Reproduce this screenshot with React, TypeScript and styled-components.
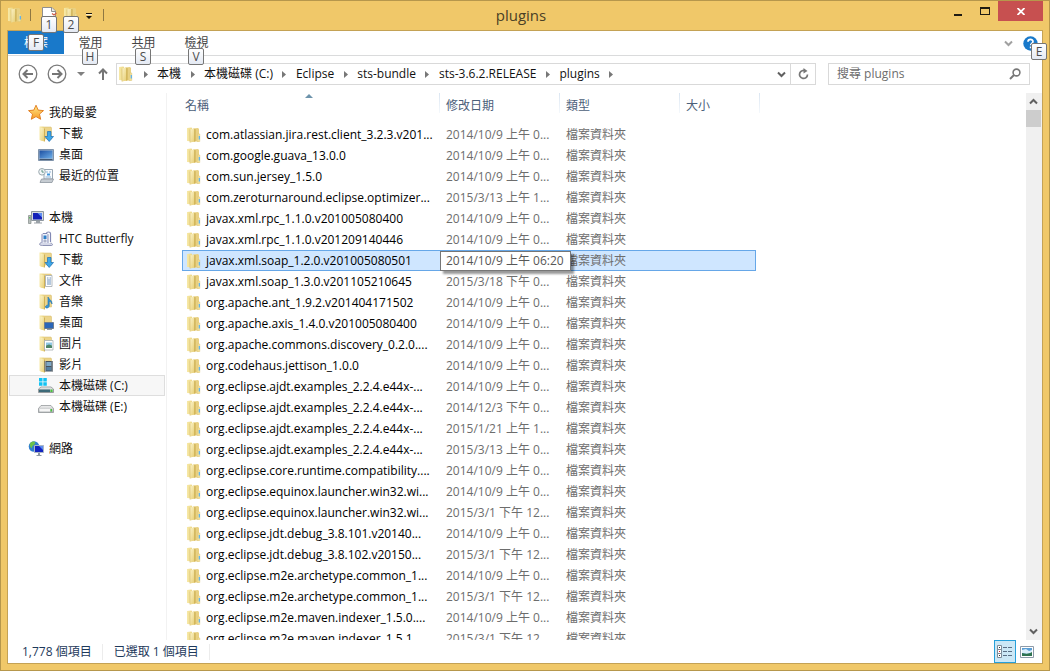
import React from "react";
import styled, { createGlobalStyle, css } from "styled-components";

const GlobalStyle = createGlobalStyle`
  *, *::before, *::after { box-sizing: border-box; }
  body {
    margin: 0;
    font-family: "Open Sans", "Noto Sans CJK TC", sans-serif;
    font-size: 12px;
    line-height: 16px;
    color: #000;
  }
  button, input { font: inherit; color: inherit; }
  ul, ol { list-style: none; margin: 0; padding: 0; }
`;

/* ---------- Window frame ---------- */

const Frame = styled.div`
  display: flex;
  flex-direction: column;
  height: 100vh;
  padding: 0 6px 6px;
  background: #f0c869;
  border: 1px solid #b6974c;
`;

const TitleBar = styled.header`
  display: grid;
  grid-template-columns: 1fr auto 1fr;
  flex: none;
  height: 29px;
`;

const QuickAccess = styled.div`
  display: flex;
  align-items: center;
  height: 28px;
`;

const PlainButton = styled.button`
  position: relative;
  display: flex;
  align-items: center;
  justify-content: center;
  flex: none;
  padding: 0;
  border: 0;
  background: none;
`;

const QuickButton = styled(PlainButton)<{ $narrow?: boolean }>`
  width: ${(p) => (p.$narrow ? 14 : 22)}px;
  height: 22px;
`;

const Divider = styled.span`
  width: 1px;
  height: 12px;
  margin: 0 7px;
  background: #8e7742;
`;

const Title = styled.h1`
  margin: 0;
  padding-right: 8px;
  font-size: 15px;
  font-weight: 400;
  line-height: 28px;
  color: #4a3f26;
`;

const WindowButtons = styled.div`
  display: flex;
  justify-content: flex-end;
`;

const WindowButton = styled(PlainButton)<{ $close?: boolean }>`
  width: ${(p) => (p.$close ? 45 : 27)}px;
  height: 20px;
  background: ${(p) => (p.$close ? "#c75050" : "transparent")};
`;

const Content = styled.div`
  display: flex;
  flex-direction: column;
  flex: 1;
  min-height: 0;
  background: #fff;
  border: 1px solid #c4a255;
`;

const KeyTip = styled.kbd<{ $x: number; $y: number }>`
  position: absolute;
  z-index: 2;
  left: ${(p) => p.$x}px;
  top: ${(p) => p.$y}px;
  width: 16px;
  height: 17px;
  border: 1px solid #767676;
  border-radius: 2px;
  background: linear-gradient(#fff, #e4e9f3);
  color: #4c4c4c;
  font: 12px/15px "Open Sans", sans-serif;
  text-align: center;
`;

/* ---------- Ribbon tabs ---------- */

const Tabs = styled.nav`
  display: flex;
  flex: none;
  height: 25px;
  border-bottom: 1px solid #dadbdc;
`;

const Tab = styled(PlainButton)<{ $file?: boolean }>`
  width: ${(p) => (p.$file ? 56 : 53)}px;
  height: ${(p) => (p.$file ? 23 : 24)}px;
  background: ${(p) => (p.$file ? "#1979ca" : "transparent")};
  color: ${(p) => (p.$file ? "#fff" : "#444")};
`;

const TabTools = styled.div`
  display: flex;
  align-items: center;
  gap: 10px;
  margin-left: auto;
  padding-right: 4px;
`;

/* ---------- Address row ---------- */

const AddressRow = styled.div`
  display: flex;
  align-items: center;
  flex: none;
  height: 36px;
  padding-right: 12px;
  padding-left: 10px;
`;

const NavButton = styled(PlainButton)<{ $w: number; $gap?: number }>`
  width: ${(p) => p.$w}px;
  height: 20px;
  margin-right: ${(p) => p.$gap ?? 0}px;
`;

const AddressBox = styled.div`
  display: flex;
  align-items: stretch;
  flex: 1;
  min-width: 0;
  height: 22px;
  border: 1px solid #d9d9d9;
`;

const Crumbs = styled.ol`
  display: flex;
  align-items: center;
  flex: 1;
  padding-left: 1px;
`;

const Crumb = styled.li`
  display: flex;
  align-items: center;
  white-space: nowrap;
`;

const CrumbLink = styled.a`
  color: #111;
  text-decoration: none;
`;

const CrumbArrow = styled(PlainButton)`
  width: 23px;
  height: 20px;
`;

const Refresh = styled(PlainButton)`
  width: 25px;
  border-left: 1px solid #d9d9d9;
`;

const SearchBox = styled.label`
  display: flex;
  align-items: center;
  flex: none;
  width: 202px;
  height: 22px;
  margin-left: 12px;
  padding: 0 8px;
  border: 1px solid #d9d9d9;
`;

const SearchInput = styled.input`
  flex: 1;
  min-width: 0;
  padding: 0;
  border: 0;
  outline: 0;
  background: none;
  &::placeholder { color: #6d6d6d; opacity: 1; }
`;

/* ---------- Body ---------- */

const Body = styled.div`
  display: flex;
  flex: 1;
  min-height: 0;
  padding-top: 1px;
`;

const Sidebar = styled.aside`
  flex: none;
  width: 159px;
  padding: 9px 1px 0;
  border-right: 1px solid #f2f2f2;
`;

const Group = styled.ul`
  margin-bottom: 21px;
`;

const SideItem = styled.li<{ $root?: boolean; $selected?: boolean }>`
  border: 1px solid ${(p) => (p.$selected ? "#dedede" : "transparent")};
  background: ${(p) => (p.$selected ? "#f7f7f7" : "transparent")};
  padding-left: ${(p) => (p.$root ? 18 : 28)}px;
`;

const SideLink = styled.a`
  display: flex;
  align-items: center;
  gap: 5px;
  height: 19px;
  color: #111;
  text-decoration: none;
  white-space: nowrap;
`;

const Main = styled.main`
  flex: 1;
  min-width: 0;
  overflow: hidden;
  padding-left: 15px;
`;

const FileTable = styled.table`
  width: 578px;
  table-layout: fixed;
  border-collapse: separate;
  border-spacing: 0;
`;

const HeadCell = styled.th`
  position: relative;
  height: 31px;
  padding: 0 0 6px 6px;
  font-weight: 400;
  text-align: left;
  color: #4c607a;
  background: linear-gradient(#dbe6f2, #f4f8fc) right top / 1px 20px no-repeat;
  &:first-child { padding-left: 3px; }
`;

const SortMark = styled.svg`
  position: absolute;
  left: 123px;
  top: 0;
`;

const selectedCell = css`
  background: #cfe6ff;
  border-color: #66a7e8;
`;

const Cell = styled.td`
  position: relative;
  height: 21px;
  padding: 0 0 0 6px;
  border: 0 solid transparent;
  border-width: 1px 0;
  color: #6d6d6d;
  white-space: nowrap;
`;

const Row = styled.tr<{ $selected?: boolean }>`
  ${(p) =>
    p.$selected &&
    css`
      ${Cell} { ${selectedCell} }
      ${Cell}:first-child { border-left-width: 1px; padding-left: 3px; }
      ${Cell}:nth-child(4) { border-right-width: 1px; }
      ${Cell}:last-child { background: none; border-color: transparent; }
    `}
`;

const NameCell = styled(Cell)`
  padding-left: 4px;
  color: #000;
`;

const FileName = styled.span`
  display: flex;
  align-items: center;
  gap: 4px;
  height: 19px;
`;

const Tooltip = styled.span`
  position: absolute;
  z-index: 1;
  left: 0;
  top: 0;
  height: 20px;
  padding: 0 6px 0 5px;
  border: 1px solid #767676;
  background: #fff;
  box-shadow: 3px 3px 2px rgba(0, 0, 0, 0.4);
  line-height: 18px;
  color: #575757;
`;

const ScrollBar = styled.div`
  display: flex;
  flex-direction: column;
  flex: none;
  width: 16px;
  background: #f0f0f0;
`;

const ScrollButton = styled(PlainButton)`
  width: 14px;
  height: 17px;
`;

const ScrollTrack = styled.div`
  flex: 1;
`;

const ScrollThumb = styled.div`
  width: 15px;
  height: 17px;
  background: #cdcdcd;
`;

/* ---------- Status bar ---------- */

const StatusBar = styled.footer`
  display: flex;
  align-items: center;
  flex: none;
  height: 23px;
  padding: 0 4px 0 14px;
  color: #1e395b;
`;

const StatusText = styled.span`
  padding-right: 10px;
  margin-right: 11px;
  border-right: 1px solid #ececec;
`;

const Views = styled.div`
  display: flex;
  margin-left: auto;
`;

const ViewButton = styled(PlainButton)<{ $active?: boolean }>`
  width: 22px;
  height: 23px;
  border: 1px solid ${(p) => (p.$active ? "#26a0da" : "transparent")};
  background: ${(p) => (p.$active ? "#cbe8f6" : "transparent")};
`;

/* ---------- Icons ---------- */

const Gradients = () => (
  <svg width="0" height="0" style={{ position: "absolute" }} aria-hidden="true">
    <defs>
      <linearGradient id="fold" x1="0" x2="1" y1="0" y2="0">
        <stop offset="0" stopColor="#f7e9a8" />
        <stop offset="1" stopColor="#ecd682" />
      </linearGradient>
      <linearGradient id="foldFront" x1="0" x2="1" y1="0" y2="1">
        <stop offset="0" stopColor="#fbf3c8" />
        <stop offset="1" stopColor="#e6cc70" />
      </linearGradient>
      <linearGradient id="screen" x1="0" x2="1" y1="0" y2="1">
        <stop offset="0" stopColor="#1d4fa0" />
        <stop offset="1" stopColor="#6fb0ea" />
      </linearGradient>
      <linearGradient id="star" x1="0" x2="0" y1="0" y2="1">
        <stop offset="0" stopColor="#ffe98a" />
        <stop offset="1" stopColor="#f79a22" />
      </linearGradient>
      <linearGradient id="drive" x1="0" x2="0" y1="0" y2="1">
        <stop offset="0" stopColor="#f2f2f2" />
        <stop offset="1" stopColor="#a9adb0" />
      </linearGradient>
    </defs>
  </svg>
);

const Svg16 = ({ children }: { children: React.ReactNode }) => (
  <svg width="16" height="16" viewBox="0 0 16 16" aria-hidden="true">
    {children}
  </svg>
);

const FolderIcon = () => (
  <Svg16>
    <path d="M7 1.500l5-.5 1 1v12.500H7z" fill="#e9d183" />
    <path d="M12 6.500l1.800.5v7.500H11z" fill="#f1df9a" stroke="#d9bf69" strokeWidth=".4" />
    <path d="M12.700 9h1.300v3.500h-1.300z" fill="#62b3ea" />
    <path d="M1 1l4.500-.5L6.500 2v12.500L1 14z" fill="url(#fold)" />
    <path d="M4 2.500 9 1.500v13L4 15.500z" fill="url(#foldFront)" />
    <path d="M8.300 1.700l1.200.6v12l-1.200.5z" fill="#c9ab4e" />
    <path d="M4 2.500v13" stroke="#d8c073" strokeWidth=".7" />
  </Svg16>
);

const LibraryBase = () => (
  <>
    <path d="M5 1h8l.5 1v11H6z" fill="#ecd48a" stroke="#d5b966" strokeWidth=".5" />
    <path d="M1.500.500H5l1 1V15l-4.500-1z" fill="url(#fold)" />
    <path d="M2.500 1.500l4 1V15.500l-4-1z" fill="url(#foldFront)" />
    <path d="M6 2.300l1 .4v12.500l-1 .3z" fill="#cfb156" />
  </>
);

const icons: Record<string, React.ReactNode> = {
  star: (
    <path
      d="M8 .2l2.200 4.900 5.300.5-4 3.500 1.200 5.200L8 11.600l-4.700 2.700 1.200-5.200-4-3.500 5.300-.5z"
      fill="url(#star)"
      stroke="#e0791b"
      strokeWidth=".9"
    />
  ),
  download: (
    <>
      <LibraryBase />
      <path d="M9.500 5.500h3.500v5h2.500l-4.300 5-4.200-5h2.500z" fill="#3da7e8" stroke="#1b6fb5" strokeWidth=".7" />
    </>
  ),
  desktop: (
    <>
      <path d="M.5 2.500h15v11H.5z" fill="#a9b7c8" stroke="#7f93ab" />
      <path d="M1.500 3.500h13v8h-13z" fill="url(#screen)" />
      <path d="M1.500 12h13v1h-13z" fill="#42566f" />
    </>
  ),
  recent: (
    <>
      <path d="M6 1.500h8.500v9.500H6z" fill="#f7fafd" stroke="#9aa7b3" />
      <path d="M8 4h2M11 4h2M7.500 9h5.500" stroke="#8fb3d4" />
      <path d="M9 5.500h3v2H9z" fill="#3f95dc" />
      <path d="M3.500 11h12L14 14.500H2z" fill="#c6ccd2" stroke="#8d969e" strokeWidth=".8" />
      <circle cx="4" cy="3.800" r="3.300" fill="#f2f5f7" stroke="#9aa9ae" />
      <path d="M4 1.800v2.300h1.800" stroke="#3d7f6c" fill="none" strokeWidth=".8" />
    </>
  ),
  computer: (
    <>
      <path d="M.5 5.500h2.500v8H.5z" fill="#b9c0bd" stroke="#838a88" strokeWidth=".7" />
      <path d="M1.200 7h1v1.500h-1z" fill="#4db04a" />
      <path d="M3.500 1.500h12v9h-12z" fill="#d5dae0" stroke="#8e979f" />
      <path d="M5 3h9v6.500H5z" fill="#1420b8" />
      <path d="M9.500 3H14v4.500z" fill="#5f8df2" />
      <path d="M8 11h4v1.500h2v1H6v-1h2z" fill="#9ba2a8" />
    </>
  ),
  phone: (
    <>
      <path d="M8.500 2.500c0-2 4-2 4 0v8.500" fill="none" stroke="#8289b4" strokeWidth="1.200" />
      <path d="M4 3.500 5 2.500h4l1 1v9H4z" fill="#eef1fa" stroke="#777eab" strokeWidth=".9" />
      <path d="M5.500 4.500h3V8h-3z" fill="#2d7fc8" />
      <circle cx="7" cy="10" r="1.100" fill="#fff" stroke="#5d648c" strokeWidth=".6" />
      <path d="M3.500 11.500c-3 1-2.500 3 1 3h9c1.500 0 1.500-2-1-2.500" fill="#d5d8e8" stroke="#8d92b4" />
    </>
  ),
  document: (
    <>
      <LibraryBase />
      <path d="M7.500 2.500h6.500v11H7.500z" fill="#fff" stroke="#a3abb3" strokeWidth=".8" />
      <path d="M9 5h1.500M11.500 5h1.500M9 7h4M9 9h4M9 11h4" stroke="#6c92bd" />
    </>
  ),
  music: (
    <>
      <LibraryBase />
      <path d="M10 3c.5 2.500 4.500 3 4 7-.5-2-2-2.500-2.800-2.800V12c0 2-3.700 3-3.700 1 0-1.500 1.500-2 2.500-1.800z" fill="#3598dc" stroke="#1d6dab" strokeWidth=".6" />
    </>
  ),
  deskFolder: (
    <>
      <LibraryBase />
      <path d="M6.500 7.500h9v6h-9z" fill="#2a66b8" stroke="#6c7c90" />
      <path d="M9 14.500h5" stroke="#8c98a6" />
    </>
  ),
  picture: (
    <>
      <LibraryBase />
      <path d="M6.500 4.500h8.500v9.500H6.500z" fill="#fff" stroke="#a4acb0" strokeWidth=".8" />
      <path d="M8 6.500h6v3H8z" fill="#8fc7e6" />
      <path d="M8 9.500l3-1 3 1v2.500H8z" fill="#4c8568" />
    </>
  ),
  video: (
    <>
      <LibraryBase />
      <path d="M6.500 4h8.500v10.500H6.500z" fill="#47525c" />
      <path d="M8.300 5h5v4h-5z" fill="#7fa9c6" />
      <path d="M8.300 10h5v3.500h-5z" fill="#5681a3" />
      <path d="M7.400 4.500v10M14.200 4.500v10" stroke="#e6e9eb" strokeDasharray="1 1" />
    </>
  ),
  driveC: (
    <>
      <path d="M1 0h3.500v3.500H1zM5.300 0h3.500v3.500H5.300zM1 4.300h3.500v3.500H1zM5.300 4.300h3.500v3.500H5.300z" fill="#12c2f3" />
      <path d="M3 9h10l2.500 2v3.500H.5V11z" fill="url(#drive)" stroke="#7c8487" strokeWidth=".7" />
      <path d="M1 11.500h11v2.500H1z" fill="#3d6a78" />
      <path d="M12.500 11.500h2V14h-2z" fill="#48c63c" />
    </>
  ),
  driveE: (
    <>
      <path d="M3 6.500h10l2.500 3v4H.5v-4z" fill="url(#drive)" stroke="#8a8e90" strokeWidth=".7" />
      <path d="M1.500 10h10.500v2.500H1.500z" fill="#f6f6f6" />
      <path d="M12.500 10h1.500v2.500h-1.500z" fill="#48c63c" />
    </>
  ),
  network: (
    <>
      <circle cx="6" cy="5.500" r="5.300" fill="#2f7fd0" />
      <path d="M2 2.500c2-3 6-2 5 0S4 4.500 4 6.500 1 5.500 2 2.500zM7 6.500l3-2v3z" fill="#6cc24a" />
      <path d="M6.500 4.500h9v7h-9z" fill="#1324c0" stroke="#aab6c6" />
      <path d="M11 5h4v4z" fill="#5c8bf0" />
      <path d="M10 12h2v2h1.500v1H8.500v-1H10z" fill="#8d98a5" />
    </>
  ),
};

const DocIcon = () => (
  <svg width="16" height="16" viewBox="0 0 16 16" aria-hidden="true">
    <path d="M1.500.500h9.500l3.500 3.500v11.500h-13z" fill="#fff" stroke="#8f8f8f" />
    <path d="M10.500 1v3.500H14" fill="#e9e9e9" stroke="#8f8f8f" />
    <path d="M11 6.500l2 1.500 2.500-2" fill="none" stroke="#d0604a" strokeWidth="1.300" />
  </svg>
);

const Chevron = ({ up, color = "#606060" }: { up?: boolean; color?: string }) => (
  <svg width="9" height="7" viewBox="0 0 9 7" aria-hidden="true">
    <path d={up ? "M1 5.500 4.500 2 8 5.500" : "M1 1.500 4.500 5 8 1.500"} fill="none" stroke={color} strokeWidth="2" />
  </svg>
);

const CircleArrow = ({ forward }: { forward?: boolean }) => (
  <svg width="20" height="20" viewBox="0 0 20 20" aria-hidden="true">
    <circle cx="10" cy="10" r="8.800" fill="#fff" stroke="#7a7a7a" strokeWidth="1.300" />
    <path
      d={forward ? "M5 10h9M10.500 6l4 4-4 4" : "M15 10H6M9.500 6l-4 4 4 4"}
      fill="none"
      stroke="#757575"
      strokeWidth="2"
    />
  </svg>
);

const CrumbTriangle = () => (
  <svg width="4" height="7" viewBox="0 0 4 7" aria-hidden="true">
    <path d="M0 0l4 3.500L0 7z" fill="#777" />
  </svg>
);

/* ---------- Data ---------- */

const crumbs = ["本機", "本機磁碟 (C:)", "Eclipse", "sts-bundle", "sts-3.6.2.RELEASE", "plugins"];

const tabs = [
  { label: "常用", tip: "H" },
  { label: "共用", tip: "S" },
  { label: "檢視", tip: "V" },
];

type Place = [icon: string, label: string];

const places: Place[][] = [
  [
    ["star", "我的最愛"],
    ["download", "下載"],
    ["desktop", "桌面"],
    ["recent", "最近的位置"],
  ],
  [
    ["computer", "本機"],
    ["phone", "HTC Butterfly"],
    ["download", "下載"],
    ["document", "文件"],
    ["music", "音樂"],
    ["deskFolder", "桌面"],
    ["picture", "圖片"],
    ["video", "影片"],
    ["driveC", "本機磁碟 (C:)"],
    ["driveE", "本機磁碟 (E:)"],
  ],
  [["network", "網路"]],
];

const files: [name: string, date: string][] = [
  ["com.atlassian.jira.rest.client_3.2.3.v201...", "2014/10/9 上午 0..."],
  ["com.google.guava_13.0.0", "2014/10/9 上午 0..."],
  ["com.sun.jersey_1.5.0", "2014/10/9 上午 0..."],
  ["com.zeroturnaround.eclipse.optimizer...", "2015/3/13 上午 1..."],
  ["javax.xml.rpc_1.1.0.v201005080400", "2014/10/9 上午 0..."],
  ["javax.xml.rpc_1.1.0.v201209140446", "2014/10/9 上午 0..."],
  ["javax.xml.soap_1.2.0.v201005080501", "2014/10/9 上午 06:20"],
  ["javax.xml.soap_1.3.0.v201105210645", "2015/3/18 下午 0..."],
  ["org.apache.ant_1.9.2.v201404171502", "2014/10/9 上午 0..."],
  ["org.apache.axis_1.4.0.v201005080400", "2014/10/9 上午 0..."],
  ["org.apache.commons.discovery_0.2.0....", "2014/10/9 上午 0..."],
  ["org.codehaus.jettison_1.0.0", "2014/10/9 上午 0..."],
  ["org.eclipse.ajdt.examples_2.2.4.e44x-...", "2014/10/9 上午 0..."],
  ["org.eclipse.ajdt.examples_2.2.4.e44x-...", "2014/12/3 下午 0..."],
  ["org.eclipse.ajdt.examples_2.2.4.e44x-...", "2015/1/21 上午 1..."],
  ["org.eclipse.ajdt.examples_2.2.4.e44x-...", "2015/3/13 上午 0..."],
  ["org.eclipse.core.runtime.compatibility....", "2014/10/9 上午 0..."],
  ["org.eclipse.equinox.launcher.win32.wi...", "2014/10/9 上午 0..."],
  ["org.eclipse.equinox.launcher.win32.wi...", "2015/3/1 下午 12..."],
  ["org.eclipse.jdt.debug_3.8.101.v20140...", "2014/10/9 上午 0..."],
  ["org.eclipse.jdt.debug_3.8.102.v20150...", "2015/3/1 下午 12..."],
  ["org.eclipse.m2e.archetype.common_1...", "2014/10/9 上午 0..."],
  ["org.eclipse.m2e.archetype.common_1...", "2015/3/1 下午 12..."],
  ["org.eclipse.m2e.maven.indexer_1.5.0....", "2014/10/9 上午 0..."],
  ["org.eclipse.m2e.maven.indexer_1.5.1....", "2015/3/1 下午 12..."],
];

const SELECTED_FILE = 6;

/* ---------- App ---------- */

export default function App() {
  return (
    <>
      <GlobalStyle />
      <Gradients />
      <Frame>
        <TitleBar>
          <QuickAccess>
            <FolderIcon />
            <Divider />
            <QuickButton aria-label="內容">
              <DocIcon />
              <KeyTip $x={3} $y={12}>1</KeyTip>
            </QuickButton>
            <QuickButton aria-label="新增資料夾">
              <FolderIcon />
              <KeyTip $x={3} $y={12}>2</KeyTip>
            </QuickButton>
            <QuickButton $narrow aria-label="自訂快速存取工具列">
              <svg width="8" height="10" viewBox="0 0 8 10" aria-hidden="true">
                <path d="M1 3h6v1H1zM1 6h6L4 9z" fill="#1a160d" />
                <path d="M1 4h6v1H1z" fill="#fbeecb" />
              </svg>
            </QuickButton>
            <Divider />
          </QuickAccess>
          <Title>plugins</Title>
          <WindowButtons>
            <WindowButton aria-label="最小化">
              <svg width="8" height="10" viewBox="0 0 8 10" aria-hidden="true">
                <path d="M0 8h8v2H0z" fill="#1f1b12" />
              </svg>
            </WindowButton>
            <WindowButton aria-label="最大化">
              <svg width="10" height="8" viewBox="0 0 10 8" aria-hidden="true">
                <path d="M0 0h10v8H0zM1 2v5h8V2z" fill="#1f1b12" fillRule="evenodd" />
              </svg>
            </WindowButton>
            <WindowButton $close aria-label="關閉">
              <svg width="8" height="7" viewBox="0 0 8 7" aria-hidden="true">
                <path d="M.5 0l7 7M7.500 0l-7 7" stroke="#fff" strokeWidth="1.800" />
              </svg>
            </WindowButton>
          </WindowButtons>
        </TitleBar>

        <Content>
          <Tabs>
            <Tab $file>
              檔案
              <KeyTip $x={20} $y={3}>F</KeyTip>
            </Tab>
            {tabs.map((t) => (
              <Tab key={t.tip}>
                {t.label}
                <KeyTip $x={18} $y={17}>{t.tip}</KeyTip>
              </Tab>
            ))}
            <TabTools>
              <PlainButton aria-label="展開功能區">
                <Chevron color="#a0a0a0" />
              </PlainButton>
              <PlainButton aria-label="說明">
                <svg width="15" height="15" viewBox="0 0 15 15" aria-hidden="true">
                  <circle cx="7.500" cy="7.500" r="7.200" fill="#1979ca" />
                  <path d="M5 5.800c0-3.200 5-3 5-.3 0 1.800-2.300 1.800-2.300 3.700" fill="none" stroke="#fff" strokeWidth="1.700" />
                  <path d="M6.800 10.500h1.800v1.800H6.800z" fill="#fff" />
                </svg>
                <KeyTip $x={8} $y={7}>E</KeyTip>
              </PlainButton>
            </TabTools>
          </Tabs>

          <AddressRow>
            <NavButton $w={20} $gap={9} aria-label="上一頁">
              <CircleArrow />
            </NavButton>
            <NavButton $w={20} $gap={9} aria-label="下一頁">
              <CircleArrow forward />
            </NavButton>
            <NavButton $w={10} $gap={9} aria-label="最近的位置">
              <svg width="8" height="4" viewBox="0 0 8 4" aria-hidden="true">
                <path d="M0 0h8L4 4z" fill="#808080" />
              </svg>
            </NavButton>
            <NavButton $w={16} $gap={5} aria-label="上一層">
              <svg width="10" height="12" viewBox="0 0 10 12" aria-hidden="true">
                <path d="M5 12V2M1 5.500l4-4 4 4" fill="none" stroke="#757575" strokeWidth="2" />
              </svg>
            </NavButton>
            <AddressBox>
              <Crumbs>
                <Crumb>
                  <FolderIcon />
                  <CrumbArrow aria-label="展開">
                    <CrumbTriangle />
                  </CrumbArrow>
                </Crumb>
                {crumbs.map((c) => (
                  <Crumb key={c}>
                    <CrumbLink href="#">{c}</CrumbLink>
                    <CrumbArrow aria-label={`展開 ${c}`}>
                      <CrumbTriangle />
                    </CrumbArrow>
                  </Crumb>
                ))}
              </Crumbs>
              <NavButton $w={18} aria-label="先前的位置">
                <Chevron />
              </NavButton>
              <Refresh aria-label="重新整理">
                <svg width="11" height="12" viewBox="0 0 11 12" aria-hidden="true">
                  <path d="M7.500 3A4 4 0 1 0 9.500 6.500" fill="none" stroke="#777" strokeWidth="1.700" />
                  <path d="M6 0h4v4.500H6z" fill="#fff" />
                  <path d="M5.500 0 9.500 3 5.500 5.500z" fill="#777" />
                </svg>
              </Refresh>
            </AddressBox>
            <SearchBox>
              <SearchInput type="text" placeholder="搜尋 plugins" aria-label="搜尋 plugins" />
              <svg width="12" height="12" viewBox="0 0 12 12" aria-hidden="true">
                <circle cx="7.500" cy="4.500" r="3.400" fill="none" stroke="#777" strokeWidth="1.600" />
                <path d="M5 7 1 11" stroke="#777" strokeWidth="2" />
              </svg>
            </SearchBox>
          </AddressRow>

          <Body>
            <Sidebar>
              {places.map((group) => (
                <Group key={group[0][1]}>
                  {group.map(([icon, label], i) => (
                    <SideItem key={label} $root={i === 0} $selected={icon === "driveC"}>
                      <SideLink href="#">
                        <Svg16>{icons[icon]}</Svg16>
                        {label}
                      </SideLink>
                    </SideItem>
                  ))}
                </Group>
              ))}
            </Sidebar>
            <Main>
              <FileTable>
                <colgroup>
                  <col width="258" />
                  <col width="120" />
                  <col width="120" />
                  <col width="76" />
                  <col width="4" />
                </colgroup>
                <thead>
                  <tr>
                    <HeadCell>
                      名稱
                      <SortMark width="8" height="5" viewBox="0 0 8 5" aria-hidden="true">
                        <path d="M0 5 4 1l4 4z" fill="#6d93ab" />
                      </SortMark>
                    </HeadCell>
                    <HeadCell>修改日期</HeadCell>
                    <HeadCell>類型</HeadCell>
                    <HeadCell colSpan={2}>大小</HeadCell>
                  </tr>
                </thead>
                <tbody>
                  {files.map(([name, date], i) => (
                    <Row key={i} $selected={i === SELECTED_FILE}>
                      <NameCell>
                        <FileName>
                          <FolderIcon />
                          {name}
                        </FileName>
                      </NameCell>
                      <Cell>{i === SELECTED_FILE ? <Tooltip role="tooltip">{date}</Tooltip> : date}</Cell>
                      <Cell>檔案資料夾</Cell>
                      <Cell />
                      <Cell />
                    </Row>
                  ))}
                </tbody>
              </FileTable>
            </Main>
            <ScrollBar>
              <ScrollButton aria-label="向上捲動">
                <Chevron up />
              </ScrollButton>
              <ScrollTrack>
                <ScrollThumb />
              </ScrollTrack>
              <ScrollButton aria-label="向下捲動">
                <Chevron />
              </ScrollButton>
            </ScrollBar>
          </Body>

          <StatusBar>
            <StatusText>1,778 個項目</StatusText>
            <StatusText>已選取 1 個項目</StatusText>
            <Views>
              <ViewButton $active aria-label="詳細資料">
                <svg width="16" height="14" viewBox="0 0 16 14" aria-hidden="true">
                  <path d="M.5.500h4v4h-4zM.5 4.500h4v4h-4zM.5 8.500h4v4h-4z" fill="#fff" stroke="#7d8c99" />
                  <path d="M2 2h1v1H2zM2 10h1v1H2z" fill="#333" />
                  <path d="M2 6h1v1H2z" fill="#d02020" />
                  <path d="M6 2.500h4M11 2.500h4M6 6.500h4M11 6.500h4M6 10.500h4M11 10.500h4" stroke="#5a6f85" />
                </svg>
              </ViewButton>
              <ViewButton aria-label="大圖示">
                <svg width="14" height="12" viewBox="0 0 14 12" aria-hidden="true">
                  <path d="M.5.500h13v11H.5z" fill="#fff" stroke="#8d9aa8" />
                  <path d="M2 2h10v8H2z" fill="#5b9fd6" />
                  <path d="M2 4l4-1 3 2 3-1v3l-5 1-5-1z" fill="#dceefa" />
                  <path d="M2 7c4 1 7 1 10-1v4H2z" fill="#2f7350" />
                </svg>
              </ViewButton>
            </Views>
          </StatusBar>
        </Content>
      </Frame>
    </>
  );
}
